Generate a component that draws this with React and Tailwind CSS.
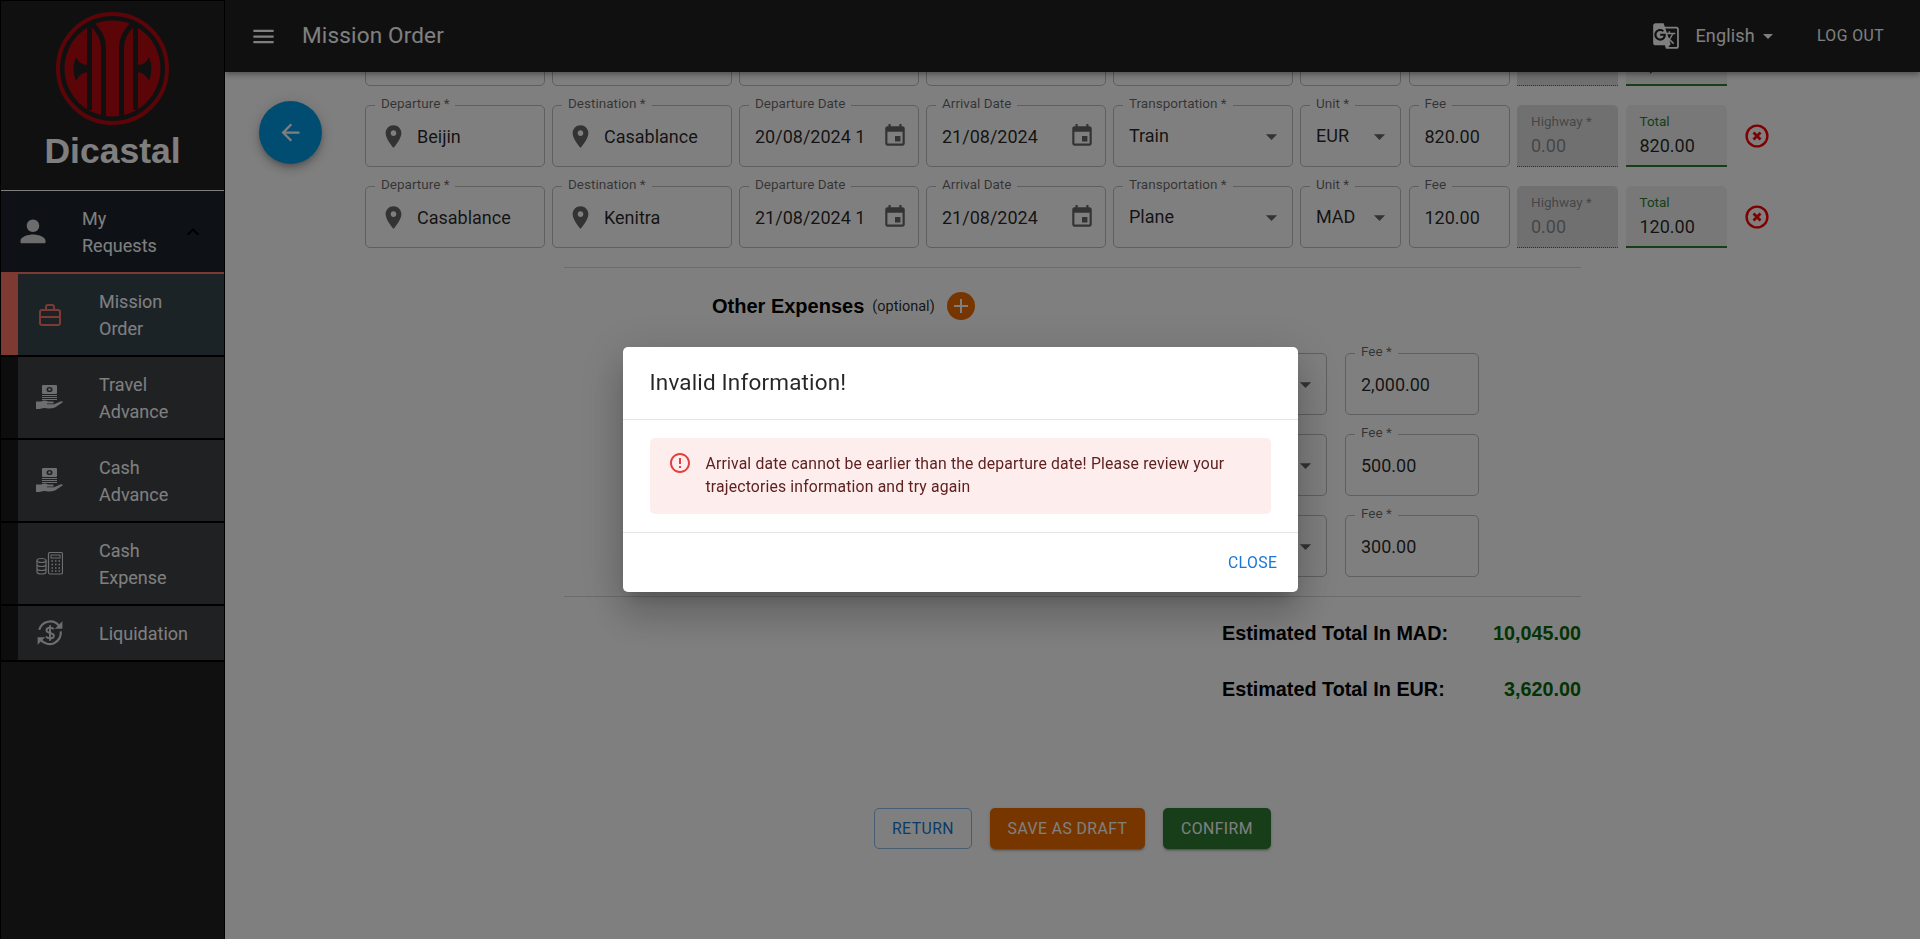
import React from 'react';

const PATHS = {
  menu: 'M3 18h18v-2H3v2zm0-5h18v-2H3v2zm0-7v2h18V6H3z',
  back: 'M20 11H7.83l5.59-5.59L12 4l-8 8 8 8 1.41-1.41L7.83 13H20v-2z',
  less: 'M12 8l-6 6 1.41 1.41L12 10.83l4.59 4.58L18 14z',
  caret: 'M7 10l5 5 5-5z',
  pin: 'M12 2C8.13 2 5 5.13 5 9c0 5.25 7 13 7 13s7-7.75 7-13c0-3.87-3.13-7-7-7zm0 9.5c-1.38 0-2.5-1.12-2.5-2.5s1.12-2.5 2.5-2.5 2.5 1.12 2.5 2.5-1.12 2.5-2.5 2.5z',
  event: 'M17 12h-5v5h5v-5zM16 1v2H8V1H6v2H5c-1.11 0-1.99.9-1.99 2L3 19c0 1.1.89 2 2 2h14c1.1 0 2-.9 2-2V5c0-1.1-.9-2-2-2h-1V1h-2zm3 18H5V8h14v11z',
  add: 'M19 13h-6v6h-2v-6H5v-2h6V5h2v6h6v2z',
  error: 'M11 15h2v2h-2zm0-8h2v6h-2zm.99-5C6.47 2 2 6.48 2 12s4.47 10 9.99 10C17.52 22 22 17.52 22 12S17.52 2 11.99 2zM12 20c-4.42 0-8-3.58-8-8s3.58-8 8-8 8 3.58 8 8-3.58 8-8 8z',
  translate: 'M21 4H11l-1-3H3c-1.1 0-2 .9-2 2v15c0 1.1.9 2 2 2h8l1 3h9c1.1 0 2-.9 2-2V6c0-1.1-.9-2-2-2zM7 16c-2.76 0-5-2.24-5-5s2.24-5 5-5c1.35 0 2.48.5 3.35 1.3L9.03 8.57c-.38-.36-1.04-.78-2.03-.78-1.74 0-3.15 1.44-3.15 3.21S5.26 14.21 7 14.21c2.01 0 2.84-1.44 2.92-2.41H7v-1.71h4.68c.07.31.12.61.12 1.02C11.8 13.97 9.89 16 7 16zm6.17-5.42h3.7c-.43 1.25-1.11 2.43-2.05 3.47-.31-.35-.6-.72-.86-1.1l-.79-2.37zm8.33 9.92c0 .55-.45 1-1 1H14l2-2.5-1.04-3.1 3.1 3.1.92-.92-3.3-3.25.02-.02c1.13-1.25 1.93-2.69 2.4-4.22H20v-1.3h-4.53V8h-1.29v1.29h-1.44L11.46 5.5h9.04c.55 0 1 .45 1 1v14z',
  person: 'M12 12c2.76 0 5-2.24 5-5s-2.24-5-5-5-5 2.24-5 5 2.24 5 5 5zm0 2c-3.6 0-10 1.6-10 5v1.2c0 .5.4.8.8.8h18.4c.4 0 .8-.3.8-.8V19c0-3.4-6.4-5-10-5z',
};

const Icon = ({ name, size = 24, className = '' }) => (
  <svg viewBox="0 0 24 24" width={size} height={size} fill="currentColor" className={`shrink-0 ${className}`}>
    <path d={PATHS[name]} />
  </svg>
);

const Logo = () => (
  <svg viewBox="0 0 113 113" width="113" height="113">
    <circle cx="56.5" cy="56.5" r="54.5" fill="none" stroke="#b80a10" strokeWidth="4" />
    <circle cx="56.5" cy="56.5" r="48" fill="#b80a10" />
    <g fill="none" stroke="#212121" strokeWidth="5">
      <path d="M33.5 14V98" />
      <path d="M79.5 14V98" />
      <path d="M47.5 108V36Q47.5 22 35 11" />
      <path d="M65.5 108V36Q65.5 22 78 11" />
    </g>
    <g fill="#212121">
      <path d="M20 45Q24 54 33 53V60Q24 60 20 69Q15 57 20 45Z" />
      <path d="M93 45Q89 54 80 53V60Q89 60 93 69Q98 57 93 45Z" />
    </g>
  </svg>
);

const BriefcaseIcon = () => (
  <svg viewBox="0 0 24 24" width="24" height="24" fill="none" stroke="currentColor" strokeWidth="2" className="shrink-0">
    <rect x="2" y="7" width="20" height="15" rx="2" />
    <path d="M2 14H22M8 7V4a2 2 0 0 1 2-2h4a2 2 0 0 1 2 2v3" />
  </svg>
);

const MoneyHandIcon = () => (
  <svg viewBox="0 0 27 25" width="27" height="25" className="shrink-0">
    <rect x="6" y="0" width="15" height="9" rx="1" fill="currentColor" />
    <ellipse cx="13.5" cy="4.5" rx="3" ry="2.6" fill="#3e4246" />
    <circle cx="13.5" cy="4.5" r="1.2" fill="currentColor" />
    <path d="M6 10.5H21M6 12.5H21M6 14.5H21" stroke="currentColor" strokeWidth="1.2" />
    <path d="M0 16.5H5C8 15 10 15.5 12 16.5H17Q18.5 17.5 17 18.5H11V19.3H18L25 16.2Q27.5 16 26.5 17.5L19 22.5Q14 24 8 23L3 24H0Z" fill="currentColor" />
  </svg>
);

const CalcIcon = () => (
  <svg viewBox="0 0 27 23" width="27" height="23" fill="none" stroke="currentColor" className="shrink-0">
    <rect x="12.5" y="0.5" width="14" height="21.5" rx="1.5" strokeWidth="1.2" />
    <rect x="15" y="3" width="9" height="3" strokeWidth="1" />
    <path d="M15.5 9H17M19 9H20.5M22.5 9H24M15.5 12.5H17M19 12.5H20.5M22.5 12.5H24M15.5 16H17M19 16H20.5M22.5 16H24M15.5 19H17M19 19H20.5M22.5 19H24" strokeWidth="1.6" />
    <ellipse cx="5.5" cy="8.5" rx="4.5" ry="2" strokeWidth="1.2" />
    <path d="M1 8.5V20C1 21.3 3 22 5.5 22S10 21.3 10 20V8.5M1 12.5C1 13.8 3 14.5 5.5 14.5S10 13.8 10 12.5M1 16.5C1 17.8 3 18.5 5.5 18.5S10 17.8 10 16.5" strokeWidth="1.2" />
  </svg>
);

const SyncDollarIcon = () => (
  <svg viewBox="0 0 26 26" width="28" height="28" fill="none" stroke="currentColor" strokeWidth="2" className="shrink-0">
    <path d="M3 10A10.5 10.5 0 0 1 21.5 6.5" />
    <path d="M23 11.5A10.5 10.5 0 0 1 4.5 19.5" />
    <path d="M24.5 2V9H17.5Z" fill="currentColor" stroke="none" />
    <path d="M1.5 24V17H8.5Z" fill="currentColor" stroke="none" />
    <path d="M16.5 9.5C15.8 8.3 14.6 8 13 8C11 8 9.7 9 9.7 10.5C9.7 13.8 16.6 12.2 16.6 15.5C16.6 17 15 18 13 18C11.2 18 10 17.5 9.3 16.2M13 5.8V20.2" strokeWidth="1.8" />
  </svg>
);

const NAV_ITEMS = [
  { label: 'Mission Order', icon: <BriefcaseIcon />, active: true },
  { label: 'Travel Advance', icon: <MoneyHandIcon /> },
  { label: 'Cash Advance', icon: <MoneyHandIcon /> },
  { label: 'Cash Expense', icon: <CalcIcon /> },
  { label: 'Liquidation', icon: <SyncDollarIcon />, short: true },
];

const Sidebar = () => (
  <aside className="relative z-20 w-[225px] shrink-0 h-full bg-[#212121] border border-black border-b-0 text-white text-[18px] leading-[27px]">
    <div className="h-[189px] flex flex-col items-center pt-[11px]">
      <Logo />
      <div className="font-['Liberation_Sans'] font-bold text-[35.5px] leading-[40px] mt-[6px]">Dicastal</div>
    </div>
    <div className="h-[83px] flex items-center bg-[#1c242c] border-t border-white pl-[17px] border-b border-b-[#fa7466]">
      <Icon name="person" size={30} className="text-[#d8d8d8]" />
      <span className="ml-[34px] w-[90px]">My Requests</span>
      <Icon name="less" size={24} className="ml-[9px] text-black" />
    </div>
    {NAV_ITEMS.map((item) => (
      <div
        key={item.label}
        className={`flex border-b-2 ${item.short ? 'h-[56px] border-b-black' : 'h-[83px] border-b-black'} ${item.active ? 'border-t border-t-[#fa7466] h-[84px] text-white' : ''}`}
      >
        <div className={`w-[17px] shrink-0 ${item.active ? 'bg-[#fa7466]' : 'bg-[#1a1a1a]'}`} />
        <div className={`flex-1 flex items-center pl-[18px] ${item.active ? 'bg-[#38464f]' : 'bg-[#3e4246]'}`}>
          <span className={`w-[27px] flex justify-center ${item.active ? 'text-[#fa7466]' : 'text-[#dcdcdc]'}`}>{item.icon}</span>
          <span className="ml-[36px] w-[92px]">{item.label}</span>
        </div>
      </div>
    ))}
  </aside>
);

const Header = () => (
  <header className="relative z-10 h-[72px] shrink-0 bg-[#212121] text-white flex items-center pl-[25px] pr-[36px] shadow-[0_2px_4px_-1px_rgba(0,0,0,0.2),0_4px_5px_0_rgba(0,0,0,0.14),0_1px_10px_0_rgba(0,0,0,0.12)]">
    <Icon name="menu" size={27} />
    <h1 className="ml-[25px] -mt-[2px] text-[22.5px] font-normal tracking-[0.0075em] leading-none">Mission Order</h1>
    <div className="ml-auto flex items-center">
      <Icon name="translate" size={28} />
      <span className="ml-[15px] -mt-[2px] text-[18px] tracking-[0.01em]">English</span>
      <Icon name="caret" size={24} className="ml-[1px]" />
      <span className="ml-[37px] -mt-[1px] text-[15.75px] font-normal tracking-[0.02857em]">LOG OUT</span>
    </div>
  </header>
);

const Outlined = ({ label, children }) => (
  <div className="relative h-[62px] min-w-0 rounded-[5px] border border-black/25 flex items-center">
    <span className="absolute -top-[11px] left-[9px] px-[6px] bg-white text-[13.5px] leading-4 text-black/60 whitespace-nowrap">{label}</span>
    {children}
  </div>
);

const PlaceField = ({ label, value }) => (
  <Outlined label={label}>
    <Icon name="pin" size={27} className="ml-[14px] text-black/60" />
    <span className="ml-[10px] text-black/85">{value}</span>
  </Outlined>
);

const DateField = ({ label, value }) => (
  <Outlined label={label}>
    <span className="ml-[15px] w-[110px] overflow-hidden whitespace-nowrap text-black/85">{value}</span>
    <Icon name="event" size={26} className="ml-auto mr-[10px] text-black/60" />
  </Outlined>
);

const SelectField = ({ label, value }) => (
  <Outlined label={label}>
    <span className="ml-[15px] -mt-[2px] text-black/85">{value}</span>
    <Icon name="caret" size={27} className="ml-auto mr-[7px] text-black/60" />
  </Outlined>
);

const TextField = ({ label, value }) => (
  <Outlined label={label}>
    <span className="ml-[15px] text-black/85">{value}</span>
  </Outlined>
);

const Filled = ({ label, value, total }) => (
  <div className={`relative h-[62px] rounded-t-[5px] pl-[14px] ${total ? 'bg-black/[0.06] border-b-2 border-[#2e7d32]' : 'bg-black/[0.12] border-b border-dotted border-black/60'}`}>
    <div className={`absolute top-[8px] text-[13.5px] leading-4 ${total ? 'text-[#2e7d32]' : 'text-black/40'}`}>{label}</div>
    <div className={`absolute top-[29px] leading-6 ${total ? 'text-black/85' : 'text-black/40'}`}>{value}</div>
  </div>
);

const TRAJECTORIES = [
  { from: '', to: '', dep: '', arr: '', mode: '', unit: '', fee: '', total: '2,800.00' },
  { from: 'Beijin', to: 'Casablance', dep: '20/08/2024 12:00', arr: '21/08/2024', mode: 'Train', unit: 'EUR', fee: '820.00', total: '820.00' },
  { from: 'Casablance', to: 'Kenitra', dep: '21/08/2024 12:00', arr: '21/08/2024', mode: 'Plane', unit: 'MAD', fee: '120.00', total: '120.00' },
];

const RemoveIcon = () => (
  <svg viewBox="0 0 24 24" width="24" height="24" fill="none" stroke="#ff0000" className="ml-[11px] self-center">
    <circle cx="12" cy="12" r="10.4" strokeWidth="2.4" />
    <path d="M8.5 8.5L15.5 15.5M15.5 8.5L8.5 15.5" strokeWidth="2.8" />
  </svg>
);

const TrajectoryRow = ({ row }) => (
  <div className="grid grid-cols-[repeat(5,179.5px)_repeat(4,101px)_40px] gap-x-[7.5px]">
    <PlaceField label="Departure *" value={row.from} />
    <PlaceField label="Destination *" value={row.to} />
    <DateField label="Departure Date" value={row.dep} />
    <DateField label="Arrival Date" value={row.arr} />
    <SelectField label="Transportation *" value={row.mode} />
    <SelectField label="Unit *" value={row.unit} />
    <TextField label="Fee" value={row.fee} />
    <Filled label="Highway *" value="0.00" />
    <Filled label="Total" value={row.total} total />
    <RemoveIcon />
  </div>
);

const EXPENSES = ['2,000.00', '500.00', '300.00'];

const ExpenseRow = ({ fee }) => (
  <div className="flex pl-[166px]">
    <div className="w-[247px]"><TextField label="Description *" value="" /></div>
    <div className="w-[202px] ml-[8px]"><TextField label="Date *" value="" /></div>
    <div className="w-[132px] ml-[8px]"><SelectField label="Currency *" value="" /></div>
    <div className="w-[134px] ml-[18px]"><TextField label="Fee *" value={fee} /></div>
  </div>
);

const TotalLine = ({ label, value }) => (
  <div className="flex justify-between pl-[658px] font-['Liberation_Sans'] font-bold text-[19.8px] leading-6">
    <span className="text-black">{label}</span>
    <span className="text-[#086808]">{value}</span>
  </div>
);

const ActionButton = ({ className, children }) => (
  <button className={`h-[41px] rounded-[5px] text-[15.75px] font-normal tracking-[0.02857em] ${className}`}>{children}</button>
);

const RAISED = 'text-white shadow-[0_3px_1px_-2px_rgba(0,0,0,0.2),0_2px_2px_0_rgba(0,0,0,0.14),0_1px_5px_0_rgba(0,0,0,0.12)]';

const MissionForm = () => (
  <main className="relative flex-1 min-h-0 overflow-hidden bg-white text-[18px]">
    <button className="absolute left-[34px] top-[29px] w-[63px] h-[63px] rounded-full bg-[#039be5] text-white flex items-center justify-center shadow-[0_3px_5px_-1px_rgba(0,0,0,0.2),0_6px_10px_0_rgba(0,0,0,0.14),0_1px_18px_0_rgba(0,0,0,0.12)]">
      <Icon name="back" size={27} />
    </button>
    <div className="-mt-[48px] ml-[140px] flex flex-col gap-[19px]">
      {TRAJECTORIES.map((row, i) => <TrajectoryRow key={i} row={row} />)}
    </div>
    <div className="ml-[339px] w-[1017px]">
      <div className="mt-[19px] border-t border-black/15" />
      <div className="mt-[24px] h-[28px] flex items-center pl-[148px]">
        <span className="font-['Liberation_Sans'] font-bold text-[20px]">Other Expenses</span>
        <span className="ml-[8px] mt-[2px] text-[14.5px] text-black/85">(optional)</span>
        <span className="ml-[12px] w-[28px] h-[28px] rounded-full bg-[#ef6c00] text-white flex items-center justify-center">
          <Icon name="add" size={24} />
        </span>
      </div>
      <div className="mt-[33px] flex flex-col gap-[19px]">
        {EXPENSES.map((fee) => <ExpenseRow key={fee} fee={fee} />)}
      </div>
      <div className="mt-[19px] border-t border-black/15" />
      <div className="mt-[24px]"><TotalLine label="Estimated Total In MAD:" value="10,045.00" /></div>
      <div className="mt-[32px]"><TotalLine label="Estimated Total In EUR:" value="3,620.00" /></div>
      <div className="mt-[107px] flex justify-start pl-[310px] gap-[18px]">
        <ActionButton className="w-[98px] border border-[#1976d2]/50 text-[#1976d2]">RETURN</ActionButton>
        <ActionButton className={`w-[155px] bg-[#ef6c00] ${RAISED}`}>SAVE AS DRAFT</ActionButton>
        <ActionButton className={`w-[108px] bg-[#2e7d32] ${RAISED}`}>CONFIRM</ActionButton>
      </div>
    </div>
  </main>
);

const ErrorDialog = () => (
  <div className="fixed inset-0 z-50 bg-black/50 flex items-center justify-center">
    <div className="w-[675px] h-[245px] bg-white rounded-[5px] flex flex-col shadow-[0_11px_15px_-7px_rgba(0,0,0,0.2),0_24px_38px_3px_rgba(0,0,0,0.14),0_9px_46px_8px_rgba(0,0,0,0.12)]">
      <h2 className="h-[73px] shrink-0 px-[27px] flex items-center text-[22.5px] font-normal tracking-[0.0075em] text-black/85 border-b border-black/10">Invalid Information!</h2>
      <div className="h-[113px] shrink-0 px-[27px] pt-[18px] border-b border-black/10">
        <div className="h-[76px] rounded-[5px] bg-[#fdeded] flex pl-[18px] pr-[18px] pt-[14px] text-[#5f2120] text-[15.75px] tracking-[0.01071em] leading-[23px]">
          <Icon name="error" size={24} className="text-[#e53e3e] -mt-px" />
          <p className="ml-[14px]">Arrival date cannot be earlier than the departure date! Please review your trajectories information and try again</p>
        </div>
      </div>
      <div className="flex-1 flex items-center justify-end pr-[20px]">
        <span className="text-[15.75px] font-normal tracking-[0.02857em] text-[#1976d2]">CLOSE</span>
      </div>
    </div>
  </div>
);

const App = () => (
  <div className="h-screen w-full flex overflow-hidden font-['Roboto',sans-serif]">
    <Sidebar />
    <div className="flex-1 min-w-0 flex flex-col">
      <Header />
      <MissionForm />
    </div>
    <ErrorDialog />
  </div>
);

export default App;
